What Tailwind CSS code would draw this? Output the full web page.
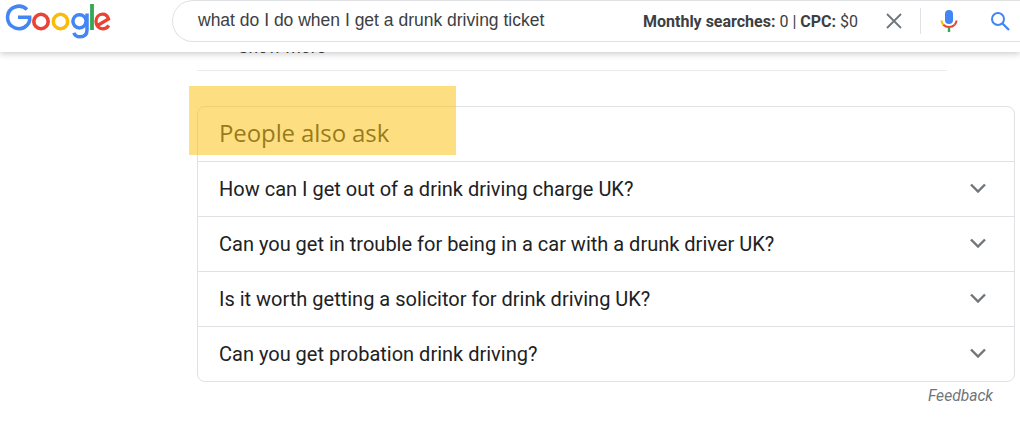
<!DOCTYPE html>
<html lang="en">
<head>
    <meta charset="UTF-8">
    <title>what do I do when I get a drunk driving ticket</title>
    <script src="https://cdn.jsdelivr.net/npm/@tailwindcss/browser@4"></script>
</head>
<body class="bg-white font-['Roboto',sans-serif] overflow-hidden">
<div class="h-[433px] flex flex-col overflow-hidden">

    <!-- Header -->
    <header class="relative z-10 h-[52px] shrink-0 bg-white flex shadow-[0_2px_6px_rgba(32,33,36,0.22)]">
        <svg class="w-[120px] h-[45px] shrink-0" viewBox="0 0 120 45" fill="none" role="img" aria-label="Google">
            <path d="M27 9.500A11.500 11.500 0 0 0 7.500 17a11.500 11.500 0 0 0 20 7.800c2-2.200 2.500-4.500 2.200-7.600H18" stroke="#4285f4" stroke-width="3.500"/>
            <circle cx="41" cy="21.500" r="7.200" stroke="#ea4335" stroke-width="3.600"/>
            <circle cx="60.500" cy="21.500" r="7.200" stroke="#fbbc05" stroke-width="3.600"/>
            <circle cx="79.500" cy="21.300" r="6.600" stroke="#4285f4" stroke-width="3.500"/>
            <path d="M87 13.500V30c0 4.800-3 6.800-7 6.800-3 0-5.200-1.600-6.200-4" stroke="#4285f4" stroke-width="3.500"/>
            <path d="M92 4v26" stroke="#34a853" stroke-width="3.800"/>
            <path d="M97.500 25.500l11-6.500c-1-3.200-3.200-4.800-5.800-4.800-4 0-6.700 3.200-6.700 7.300s2.800 7.300 6.800 7.300c2.700 0 4.700-1.300 6-3.300" stroke="#ea4335" stroke-width="3.300"/>
        </svg>

        <div class="ml-[52px] flex-1 h-[42px] flex items-center bg-white border border-[#dfe1e5] border-r-0 rounded-l-[21px]">
            <div class="ml-[25px] w-[445px] font-['Liberation_Sans',sans-serif] text-[17.5px] text-[#3c4043] -mt-[2px] whitespace-nowrap">what do I do when I get a drunk driving ticket</div>
            <div class="mt-[1px] w-[241px] text-[16px] text-[#3c4043] whitespace-nowrap"><b class="font-bold">Monthly searches:</b> 0 | <b class="font-bold">CPC:</b> $0</div>
            <svg class="w-[20px] h-[20px] shrink-0" viewBox="0 0 20 20" fill="none" stroke="#70757a" stroke-width="1.800">
                <path d="M3 3l14 14M17 3L3 17"/>
            </svg>
            <div class="ml-[16px] w-px h-[26px] bg-[#dfe1e5]"></div>
            <svg class="ml-[19px] w-[18px] h-[24px] shrink-0" viewBox="0 0 18 24" fill="none">
                <rect x="5" y="1" width="8" height="14" rx="4" fill="#4285f4"/>
                <path d="M1.500 11.500c0 1.800.7 3 1.800 4.200" stroke="#fbbc05" stroke-width="2"/>
                <path d="M3.300 15.700C4.800 17.200 6.800 18 9 18s4.200-.8 5.700-2.300" stroke="#ea4335" stroke-width="2"/>
                <path d="M14.700 15.700c1.100-1.200 1.800-2.400 1.800-4.200" stroke="#ea4335" stroke-width="2"/>
                <path d="M9 18v5" stroke="#34a853" stroke-width="2.400"/>
            </svg>
            <svg class="ml-[32px] w-[20px] h-[20px] shrink-0" viewBox="0 0 20 20" fill="none" stroke="#4285f4" stroke-width="2">
                <circle cx="8" cy="8" r="6"/>
                <path d="M12.500 12.500L19 19" stroke-width="2.300"/>
            </svg>
        </div>
    </header>

    <!-- Results -->
    <main class="relative flex-1 overflow-hidden">
        <div class="ml-[197px] w-[750px] h-[19px] border-b border-[#ebebeb] flex flex-col">
            <div class="pl-[41px] -mt-[17px] text-[17.5px] leading-[24px] text-[#3c4043]">Show more</div>
        </div>

        <section class="ml-[197px] mt-[35px] w-[818px] border border-[#dfe1e5] rounded-[8px]">
            <h2 class="h-[54px] pl-[21px] pt-[10px] font-['Open_Sans',sans-serif] text-[24px] leading-[32px] tracking-[-0.1px] text-[#202124]">People also ask</h2>
            <div class="h-[55px] border-t border-[#dfe1e5] pl-[21px] pr-[28px] flex items-center justify-between text-[20px] text-[#202124]">
                <span>How can I get out of a drink driving charge UK?</span>
                <svg class="-mt-[2px] w-[16px] h-[10px]" viewBox="0 0 16 10" fill="none" stroke="#70757a" stroke-width="2.400"><path d="M1 1.500l7 7 7-7"/></svg>
            </div>
            <div class="h-[55px] border-t border-[#dfe1e5] pl-[21px] pr-[28px] flex items-center justify-between text-[20px] text-[#202124]">
                <span>Can you get in trouble for being in a car with a drunk driver UK?</span>
                <svg class="-mt-[2px] w-[16px] h-[10px]" viewBox="0 0 16 10" fill="none" stroke="#70757a" stroke-width="2.400"><path d="M1 1.500l7 7 7-7"/></svg>
            </div>
            <div class="h-[55px] border-t border-[#dfe1e5] pl-[21px] pr-[28px] flex items-center justify-between text-[20px] text-[#202124]">
                <span>Is it worth getting a solicitor for drink driving UK?</span>
                <svg class="-mt-[2px] w-[16px] h-[10px]" viewBox="0 0 16 10" fill="none" stroke="#70757a" stroke-width="2.400"><path d="M1 1.500l7 7 7-7"/></svg>
            </div>
            <div class="h-[55px] border-t border-[#dfe1e5] pl-[21px] pr-[28px] flex items-center justify-between text-[20px] text-[#202124]">
                <span>Can you get probation drink driving?</span>
                <svg class="-mt-[2px] w-[16px] h-[10px]" viewBox="0 0 16 10" fill="none" stroke="#70757a" stroke-width="2.400"><path d="M1 1.500l7 7 7-7"/></svg>
            </div>
        </section>

        <div class="mt-[3px] w-[993px] text-right text-[15.6px] italic text-[#70757a]">Feedback</div>

        <!-- highlighter box over the heading -->
        <div class="absolute left-[189px] top-[34px] w-[267px] h-[69px] bg-[#fcc419]/55"></div>
    </main>
</div>
</body>
</html>
